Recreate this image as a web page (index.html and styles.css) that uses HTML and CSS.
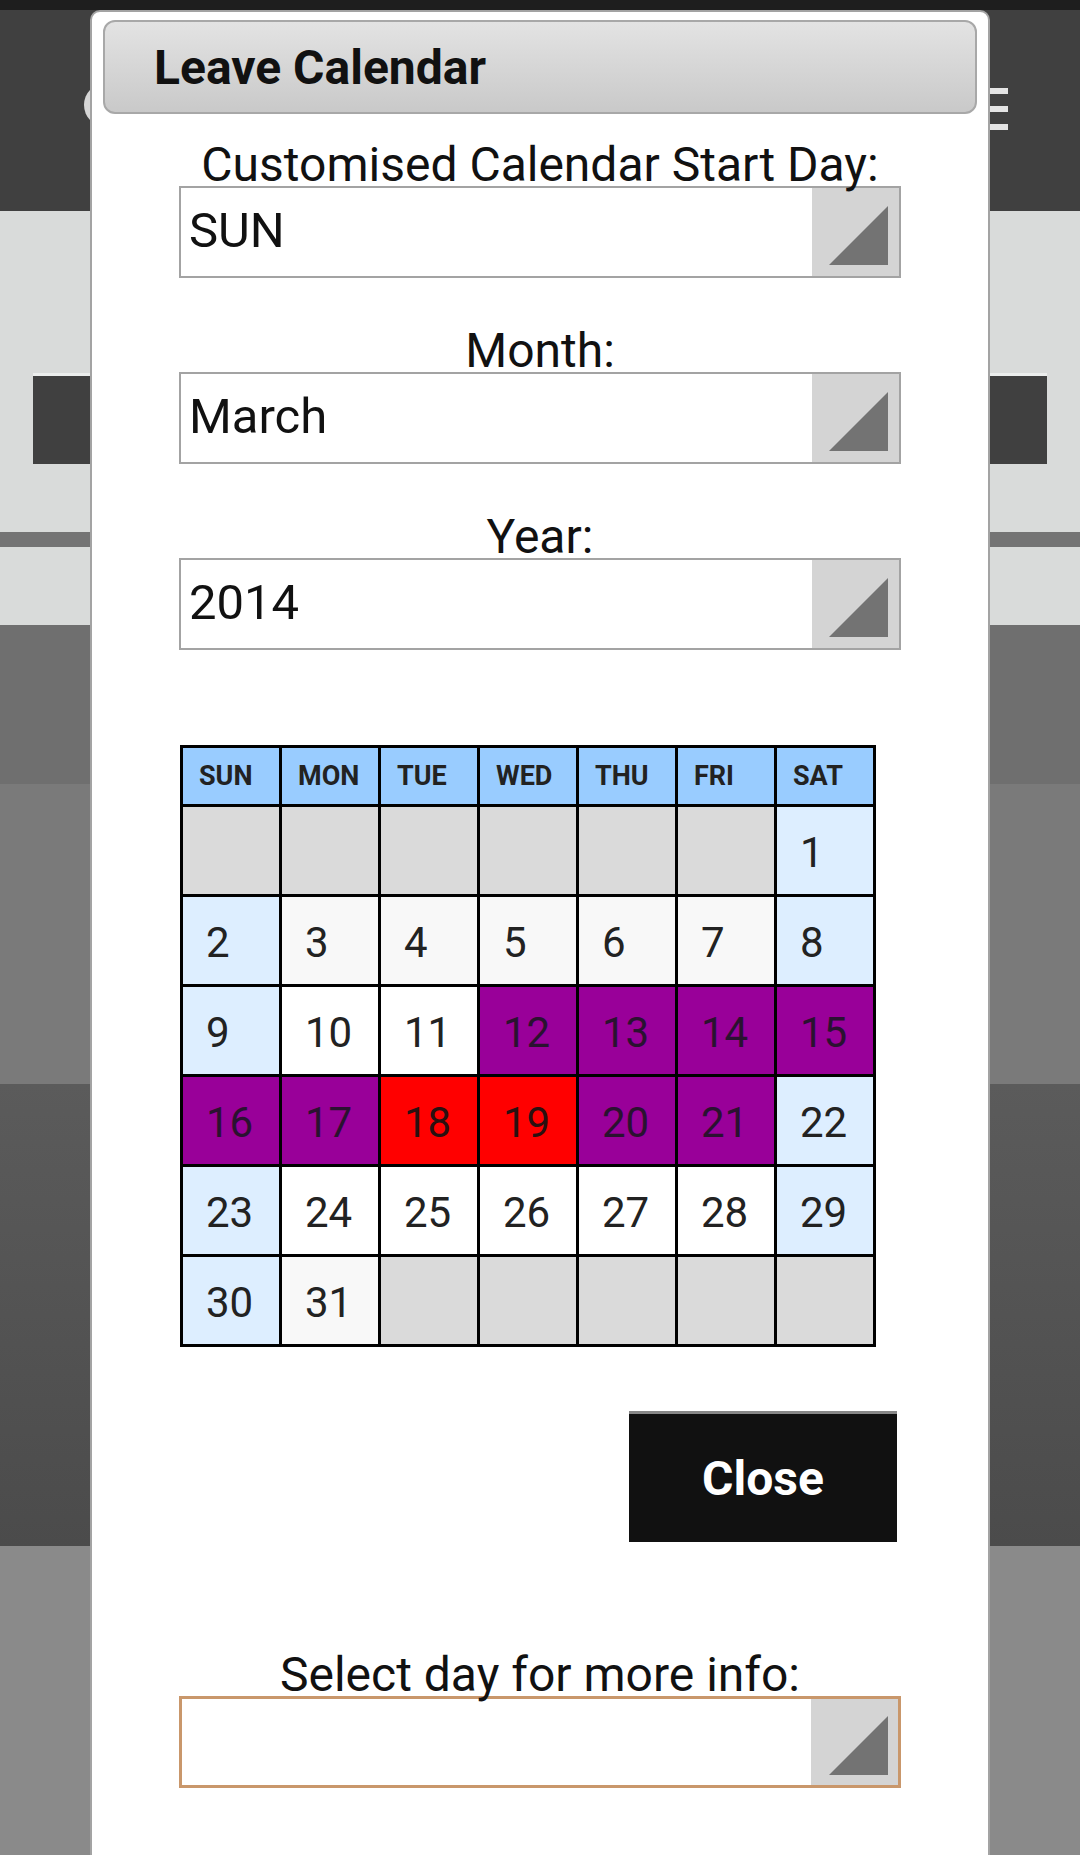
FILE: index.html
```html
<!DOCTYPE html>
<html lang="en">
<head>
<meta charset="utf-8">
<title>Leave Calendar</title>
<link rel="stylesheet" href="styles.css">
</head>
<body>
<div class="screen">
  <div class="backdrop">
    <div class="statusbar"></div>
    <div class="appbar">
      <div class="app-logo"></div>
      <div class="hamburger"><span></span><span></span><span></span></div>
    </div>
    <div class="bg-light bg-light-a">
      <div class="bg-darkbox"></div>
    </div>
    <div class="bg-rule"></div>
    <div class="bg-light bg-light-b"></div>
    <div class="bg-band bg-band-1"></div>
    <div class="bg-band bg-band-2"></div>
    <div class="bg-band bg-band-3"></div>
    <div class="bg-band bg-band-4"></div>
  </div>

  <div class="dialog">
    <div class="dialog-header">Leave Calendar</div>
    <div class="dialog-body">
      <div class="field">
        <div class="field-label">Customised Calendar Start Day:</div>
        <div class="select">
          <span class="select-value">SUN</span>
          <span class="select-arrow"><svg width="59" height="59" viewBox="0 0 59 59"><polygon points="0,59 59,0 59,59" fill="#737373"/></svg></span>
        </div>
      </div>
      <div class="field">
        <div class="field-label">Month:</div>
        <div class="select">
          <span class="select-value">March</span>
          <span class="select-arrow"><svg width="59" height="59" viewBox="0 0 59 59"><polygon points="0,59 59,0 59,59" fill="#737373"/></svg></span>
        </div>
      </div>
      <div class="field">
        <div class="field-label">Year:</div>
        <div class="select">
          <span class="select-value">2014</span>
          <span class="select-arrow"><svg width="59" height="59" viewBox="0 0 59 59"><polygon points="0,59 59,0 59,59" fill="#737373"/></svg></span>
        </div>
      </div>

      <div class="calendar">
        <div class="cal-head">SUN</div>
        <div class="cal-head">MON</div>
        <div class="cal-head">TUE</div>
        <div class="cal-head">WED</div>
        <div class="cal-head">THU</div>
        <div class="cal-head">FRI</div>
        <div class="cal-head">SAT</div>

        <div class="day empty"></div>
        <div class="day empty"></div>
        <div class="day empty"></div>
        <div class="day empty"></div>
        <div class="day empty"></div>
        <div class="day empty"></div>
        <div class="day weekend">1</div>

        <div class="day weekend">2</div>
        <div class="day soft">3</div>
        <div class="day soft">4</div>
        <div class="day soft">5</div>
        <div class="day soft">6</div>
        <div class="day soft">7</div>
        <div class="day weekend">8</div>

        <div class="day weekend">9</div>
        <div class="day">10</div>
        <div class="day">11</div>
        <div class="day leave">12</div>
        <div class="day leave">13</div>
        <div class="day leave">14</div>
        <div class="day leave">15</div>

        <div class="day leave">16</div>
        <div class="day leave">17</div>
        <div class="day holiday">18</div>
        <div class="day holiday">19</div>
        <div class="day leave">20</div>
        <div class="day leave">21</div>
        <div class="day weekend">22</div>

        <div class="day weekend">23</div>
        <div class="day">24</div>
        <div class="day">25</div>
        <div class="day">26</div>
        <div class="day">27</div>
        <div class="day">28</div>
        <div class="day weekend">29</div>

        <div class="day weekend">30</div>
        <div class="day soft">31</div>
        <div class="day empty"></div>
        <div class="day empty"></div>
        <div class="day empty"></div>
        <div class="day empty"></div>
        <div class="day empty"></div>
      </div>

      <div class="actions">
        <button class="close-btn" type="button">Close</button>
      </div>

      <div class="field field-info">
        <div class="field-label">Select day for more info:</div>
        <div class="select select-focus">
          <span class="select-value"></span>
          <span class="select-arrow"><svg width="59" height="59" viewBox="0 0 59 59"><polygon points="0,59 59,0 59,59" fill="#737373"/></svg></span>
        </div>
      </div>
    </div>
  </div>
</div>
</body>
</html>
```

FILE: styles.css
```css
html, body {
  margin: 0;
  padding: 0;
}

body {
  width: 1080px;
  height: 1855px;
  overflow: hidden;
  font-family: Roboto, "Liberation Sans", Arial, sans-serif;
  color: #111;
}

.screen {
  position: relative;
  width: 1080px;
  height: 1855px;
  overflow: hidden;
}

/* ---------- backdrop (page behind the dialog) ---------- */
.backdrop {
  display: flex;
  flex-direction: column;
  height: 1855px;
}

.statusbar {
  height: 10px;
  background: #1e1e1e;
}

.appbar {
  height: 201px;
  background: #404040;
  display: flex;
  justify-content: space-between;
  align-items: flex-start;
  padding: 73px 72px 0 84px;
  box-sizing: border-box;
}

.app-logo {
  width: 44px;
  height: 44px;
  border-radius: 50%;
  background: #d6d6d6;
}

.hamburger {
  margin-top: 5px;
  width: 30px;
  display: flex;
  flex-direction: column;
  gap: 12px;
}

.hamburger span {
  display: block;
  height: 6px;
  background: #e4e4e4;
}

.bg-light {
  background: #d9dbda;
}

.bg-light-a {
  height: 321px;
  padding-top: 162px;
  box-sizing: border-box;
}

.bg-darkbox {
  margin-left: 33px;
  width: 1014px;
  height: 88px;
  background: #404040;
  border-top: 3px solid #eceeed;
}

.bg-rule {
  height: 15px;
  background: #747474;
}

.bg-light-b {
  height: 78px;
}

.bg-band-1 {
  height: 159px;
  background: #6f6f6f;
}

.bg-band-2 {
  height: 300px;
  background: #7a7a7a;
}

.bg-band-3 {
  height: 462px;
  background: linear-gradient(#5b5b5b, #4b4b4b);
}

.bg-band-4 {
  flex: 1;
  background: #8a8a8a;
}

/* ---------- dialog ---------- */
.dialog {
  position: absolute;
  left: 90px;
  top: 10px;
  width: 900px;
  height: 1900px;
  box-sizing: border-box;
  background: #fff;
  border: 2px solid #a3a3a3;
  border-radius: 10px 10px 0 0;
  padding: 8px 11px 0;
}

.dialog-header {
  height: 94px;
  box-sizing: border-box;
  border: 2px solid #a8a8a8;
  border-radius: 12px;
  background: linear-gradient(#e3e3e3, #c9c9c9);
  display: flex;
  align-items: center;
  padding-left: 49px;
  font-weight: 700;
  font-size: 48px;
  color: #111;
}

.dialog-body {
  padding: 29px 76px 0;
  display: flex;
  flex-direction: column;
}

.field {
  display: flex;
  flex-direction: column;
  margin-bottom: 51px;
}

.field-label {
  text-align: center;
  font-size: 48px;
  line-height: 43px;
  position: relative;
  z-index: 1;
}

.select {
  height: 92px;
  box-sizing: border-box;
  border: 2px solid #a3a3a3;
  background: #fff;
  display: flex;
  align-items: stretch;
}

.select-focus {
  border: 3px solid #c9976b;
}

.select-value {
  flex: 1;
  display: flex;
  align-items: center;
  padding-left: 8px;
  padding-bottom: 3px;
  font-size: 49px;
  color: #111;
}

.select-arrow {
  width: 87px;
  background: #d4d4d4;
  display: flex;
  align-items: flex-end;
  justify-content: flex-end;
  padding: 0 11px 11px 0;
  box-sizing: border-box;
}

.select-focus .select-arrow {
  padding: 0 10px 10px 0;
}

.select-arrow svg {
  display: block;
}

/* ---------- calendar ---------- */
.calendar {
  margin-top: 44px;
  margin-left: 1px;
  width: 696px;
  box-sizing: border-box;
  display: grid;
  grid-template-columns: repeat(7, 96px);
  grid-template-rows: 56px repeat(6, 87px);
  gap: 3px;
  padding: 3px;
  background: #000;
}

.cal-head {
  background: #99ccff;
  color: #222;
  font-weight: 700;
  font-size: 27px;
  display: flex;
  align-items: center;
  padding-left: 16px;
}

.day {
  background: #fff;
  color: #222;
  font-size: 42px;
  display: flex;
  align-items: center;
  padding-left: 23px;
  padding-top: 4px;
  box-sizing: border-box;
}

.day.soft {
  background: #f8f8f8;
}

.day.weekend {
  background: #ddeeff;
}

.day.empty {
  background: #dadada;
}

.day.leave {
  background: #990099;
  color: #2a1230;
}

.day.holiday {
  background: #ff0000;
  color: #2a1010;
}

/* ---------- actions ---------- */
.actions {
  display: flex;
  justify-content: flex-end;
  padding-right: 4px;
  margin-top: 64px;
}

.close-btn {
  width: 268px;
  height: 131px;
  box-sizing: border-box;
  border: none;
  border-top: 3px solid #888;
  background: #111;
  color: #fff;
  font-family: Roboto, "Liberation Sans", Arial, sans-serif;
  font-weight: 700;
  font-size: 48px;
  padding: 0;
  cursor: pointer;
}

.field-info {
  margin-top: 111px;
}
```
